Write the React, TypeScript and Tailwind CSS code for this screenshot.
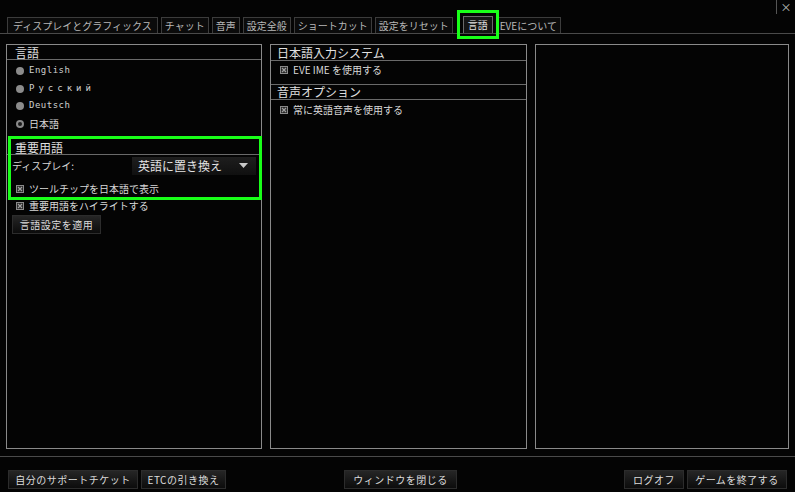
import type { ReactNode } from 'react';

const font = { fontFamily: '"Noto Sans CJK JP", "DejaVu Sans", sans-serif' };

function Tab({ label, active, pad = 'px-[3px]' }: { label: string; active?: boolean; pad?: string }) {
  return (
    <div
      className={
        active
          ? 'relative h-[17px] px-[4px] border border-b-0 border-[#6a6a6a] bg-[#151515] text-[#e0e0e0] text-[10px] leading-[16px] outline-[3px] outline-solid outline-[#19ff19] outline-offset-[3px]'
          : `h-[16px] ${pad} border border-b-0 border-[#3c3c3c] bg-[#0b0b0b] text-[#b8b8b8] text-[10px] leading-[15px]`
      }
    >
      {label}
    </div>
  );
}

function Radio({ label, selected, latin, wide }: { label: string; selected?: boolean; latin?: boolean; wide?: boolean }) {
  return (
    <div className="flex items-center h-[17.7px] pl-[9px] gap-[5px]">
      {selected ? (
        <span className="w-[8px] h-[8px] rounded-full bg-[#8a8a8a] flex items-center justify-center">
          <span className="w-[4px] h-[4px] rounded-full bg-[#1a1a1a]" />
        </span>
      ) : (
        <span className="w-[8px] h-[8px] rounded-full bg-[#8c8c8c]" />
      )}
      <span
        className={
          latin
            ? wide
              ? 'text-[9px] text-[#d0d0d0] tracking-[4px]'
              : 'text-[9px] text-[#d0d0d0] tracking-[0.5px]'
            : 'text-[10px] text-[#d8d8d8]'
        }
        style={latin ? { fontFamily: '"DejaVu Sans Mono", monospace' } : undefined}
      >
        {label}
      </span>
    </div>
  );
}

function Check() {
  return (
    <svg width="8" height="8" viewBox="0 0 8 8" className="shrink-0">
      <rect x="0.5" y="0.5" width="7" height="7" fill="#2a2a2a" stroke="#8a8a8a" />
      <path d="M2 2 L6 6 M6 2 L2 6" stroke="#a0a0a0" strokeWidth="1.2" />
    </svg>
  );
}

function CheckRow({ children }: { children: ReactNode }) {
  return (
    <div className="flex items-center gap-[5px] pl-[9px] h-[12px] leading-[12px] text-[10px] text-[#d8d8d8]">
      <Check />
      <span>{children}</span>
    </div>
  );
}

function Header({ children }: { children: ReactNode }) {
  return (
    <div className="h-[15px] border-b border-[#6a6a6a] px-[8px] text-[12px] leading-[15px] text-[#e0e0e0]">
      {children}
    </div>
  );
}

function Btn({ children, w }: { children: ReactNode; w: string }) {
  return (
    <div
      className={`${w} h-[19px] flex items-center justify-center bg-gradient-to-b from-[#262626] to-[#0c0c0c] border border-[#2c2c2c] text-[10px] text-[#dcdcdc] tracking-[0.5px]`}
    >
      {children}
    </div>
  );
}

export default function App() {
  const tabs = ['チャット', '音声', '設定全般', 'ショートカット', '設定をリセット'];

  return (
    <div className="w-[795px] h-[492px] bg-[#040404] flex flex-col overflow-hidden" style={font}>
      {/* tab bar */}
      <div className="relative h-[34px] border-b border-[#4a4a4a] flex items-end pl-[7px]">
        <div className="flex items-end gap-[3px]">
          <Tab label="ディスプレイとグラフィックス" pad="px-[5px]" />
          {tabs.map((t) => (
            <Tab key={t} label={t} />
          ))}
        </div>
        <div className="ml-[10px] flex items-end gap-[3px]">
          <Tab label="言語" active />
          <Tab label="EVEについて" />
        </div>
        <div className="absolute right-0 top-0 h-[14px] w-[19px] border-l border-[#555] flex items-center justify-center text-[11px] leading-none text-[#c0c0c0]">
          ×
        </div>
      </div>

      {/* panels */}
      <div className="flex gap-[8px] pl-[6px] pr-[6px] mt-[10px] h-[405px]">
        {/* left */}
        <div className="w-[256px] border border-[#8a8a8a] flex flex-col">
          <Header>言語</Header>
          <div className="pt-[2px]">
            <Radio label="English" latin />
            <Radio label="Русский" latin wide />
            <Radio label="Deutsch" latin />
            <Radio label="日本語" selected />
          </div>
          <div className="relative mt-[3px] h-[64px] pt-[4px]">
            <Header>重要用語</Header>
            <div className="flex items-center justify-between pl-[5px] pr-[5px] mt-[2px]">
              <span className="text-[10px] text-[#d8d8d8]">ディスプレイ:</span>
              <div className="w-[124px] h-[18px] bg-gradient-to-b from-[#1e1e1e] to-[#101010] flex items-center justify-between pl-[6px] pr-[8px]">
                <span className="text-[12px] text-[#e4e4e4]">英語に置き換え</span>
                <svg width="9" height="5" viewBox="0 0 9 5">
                  <path d="M0 0 L9 0 L4.5 5 Z" fill="#c8c8c8" />
                </svg>
              </div>
            </div>
            <div className="mt-[8px]">
              <CheckRow>ツールチップを日本語で表示</CheckRow>
            </div>
            <div className="absolute left-[1px] -right-[1px] top-0 bottom-0 border-[3px] border-[#19ff19] pointer-events-none" />
          </div>
          <div>
            <CheckRow>重要用語をハイライトする</CheckRow>
          </div>
          <div className="pl-[5px] mt-[3px]">
            <Btn w="w-[89px]">言語設定を適用</Btn>
          </div>
        </div>

        {/* middle */}
        <div className="w-[257px] border border-[#8a8a8a] flex flex-col">
          <div className="h-[16px] border-b border-[#6a6a6a] px-[6px] text-[12px] leading-[16px] text-[#e0e0e0]">日本語入力システム</div>
          <div className="h-[23px] pt-[3px]">
            <CheckRow>EVE IME を使用する</CheckRow>
          </div>
          <div className="h-[16px] border-y border-[#6a6a6a] px-[6px] text-[12px] leading-[14px] text-[#e0e0e0]">音声オプション</div>
          <div className="pt-[4px]">
            <CheckRow>常に英語音声を使用する</CheckRow>
          </div>
        </div>

        {/* right */}
        <div className="flex-1 border border-[#8a8a8a]" />
      </div>

      {/* footer */}
      <div className="mt-[7px] border-t border-[#4a4a4a]" />
      <div className="mt-[13px] flex items-center px-[8px]">
        <div className="flex gap-[3px]">
          <Btn w="w-[130px]">自分のサポートチケット</Btn>
          <Btn w="w-[85px]">ETCの引き換え</Btn>
        </div>
        <div className="ml-[118px]">
          <Btn w="w-[113px]">ウィンドウを閉じる</Btn>
        </div>
        <div className="ml-auto flex gap-[3px]">
          <Btn w="w-[60px]">ログオフ</Btn>
          <Btn w="w-[100px]">ゲームを終了する</Btn>
        </div>
      </div>
    </div>
  );
}
